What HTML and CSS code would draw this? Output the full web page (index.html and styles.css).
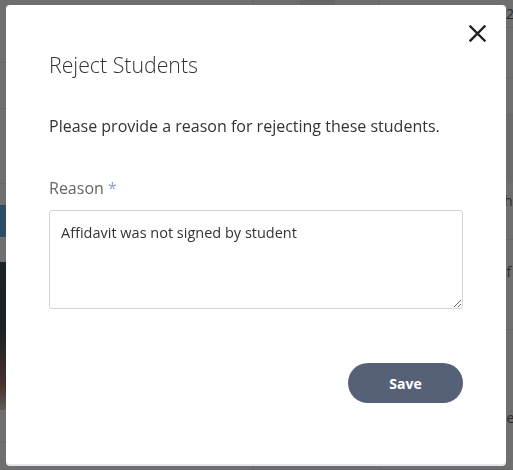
FILE: index.html
```html
<!DOCTYPE html>
<html lang="en">
<head>
<meta charset="utf-8">
<title>Reject Students</title>
<link rel="stylesheet" href="styles.css">
</head>
<body>
<div class="page">
  <div class="col col-left">
    <div class="row r63"></div>
    <div class="row r46"></div>
    <div class="row r75"></div>
    <div class="spacer s21"></div>
    <div class="band"></div>
    <div class="spacer s25"></div>
    <div class="photo"></div>
    <div class="spacer s33"></div>
  </div>
  <div class="col col-mid">
    <div class="tab"></div>
  </div>
  <div class="col col-right">
    <div class="row t28"><span class="frag">2</span></div>
    <div class="row t50"></div>
    <div class="row t37"></div>
    <div class="row t125"><span class="frag f2">h</span></div>
    <div class="row t90"><span class="frag f3">lf</span></div>
    <div class="row t140"><span class="frag f4">ie</span></div>
  </div>
</div>

<div class="overlay">
  <div class="modal" role="dialog" aria-labelledby="mtitle">
    <button class="close" aria-label="Close">
      <svg width="17" height="17" viewBox="0 0 17 17"><path d="M1.5 1.5 L15.5 15.5 M15.5 1.5 L1.5 15.5" stroke="#222" stroke-width="2.4" stroke-linecap="square" fill="none"/></svg>
    </button>
    <h2 class="title" id="mtitle">Reject Students</h2>
    <p class="intro">Please provide a reason for rejecting these students.</p>
    <label class="label" for="reason">Reason <span class="req">*</span></label>
    <textarea class="reason" id="reason">Affidavit was not signed by student</textarea>
    <div class="actions">
      <button class="save">Save</button>
    </div>
  </div>
</div>
</body>
</html>
```
FILE: styles.css
```css
* { box-sizing: border-box; }
html, body { margin: 0; padding: 0; }
body {
  width: 513px;
  height: 470px;
  overflow: hidden;
  background: #6f6f6f;
  font-family: "Open Sans", "Liberation Sans", sans-serif;
}

/* dimmed page behind the dialog */
.page {
  display: flex;
  height: 470px;
}
.col { display: flex; flex-direction: column; flex-shrink: 0; }
.col-left { width: 253px; border-right: 1px solid #646464; }
.col-mid { width: 127px; border-right: 1px solid #666; background: #6d6d6d; padding-left: 47px; }
.tab { width: 35px; height: 5px; background: #666; }
.col-right { flex: 1 1 0; min-width: 0; overflow: hidden; background: #6f6f6f; }
.row { border-bottom: 1px solid #666; }
.r63 { height: 63px; }
.r46 { height: 46px; }
.r75 { height: 75px; }
.s21 { height: 21px; }
.s25 { height: 25px; }
.s33 { height: 33px; border-bottom: 1px solid #666; }
.band { height: 32px; background: #2d4d66; }
.photo {
  height: 148px;
  background: linear-gradient(180deg, #1e2228 0%, #182224 45%, #3a2a28 70%, #4a3530 85%, #5b5e5b 100%);
}
.t28 { height: 28px; }
.t50 { height: 50px; }
.t37 { height: 37px; }
.t125 { height: 125px; background: linear-gradient(180deg, #6b6b6b 0 55%, #6f6f6f 55%); }
.t90 { height: 90px; }
.t140 { height: 140px; }
.frag {
  display: block;
  padding-left: 126px;
  font-size: 14px;
  color: #2b2b2b;
  white-space: nowrap;
  line-height: 20px;
  padding-top: 4px;
}
.f2 { padding-top: 76px; padding-left: 124px; }
.f3 { padding-top: 22px; padding-left: 123px; }
.f4 { padding-top: 78px; padding-left: 123px; }

/* dialog */
.overlay {
  position: fixed;
  inset: 0;
  padding: 5px 7px 6px 6px;
  display: flex;
}
.modal {
  position: relative;
  flex: 1;
  background: #fff;
  border-radius: 4px;
  box-shadow: 0 2px 0 #e6e6ec;
  padding: 46px 43px 0 43px;
  display: flex;
  flex-direction: column;
}
.close {
  position: absolute;
  top: 20px;
  right: 20px;
  width: 17px;
  height: 17px;
  padding: 0;
  border: 0;
  background: none;
  display: flex;
}
.title {
  margin: 0;
  font-weight: 300;
  font-size: 21.3px;
  line-height: 28px;
  color: #333;
}
.intro {
  margin: 36px 0 0;
  font-size: 16px;
  line-height: 22px;
  color: #333;
}
.label {
  margin-top: 40px;
  font-size: 16px;
  line-height: 22px;
  color: #666;
}
.req { color: #8b9cd0; }
.reason {
  margin-top: 11px;
  width: 414px;
  height: 99px;
  border: 1px solid #d3d3d8;
  border-radius: 3px;
  padding: 12px 11px;
  font-family: "Open Sans", "Liberation Sans", sans-serif;
  font-size: 14.5px;
  line-height: 20px;
  color: #333;
  resize: vertical;
}
.actions {
  margin-top: 54px;
  display: flex;
  justify-content: flex-end;
}
.save {
  width: 115px;
  height: 40px;
  border: 0;
  border-radius: 20px;
  background: #566178;
  color: #fff;
  font-family: "Open Sans", "Liberation Sans", sans-serif;
  font-weight: 700;
  font-size: 14px;
}
```
